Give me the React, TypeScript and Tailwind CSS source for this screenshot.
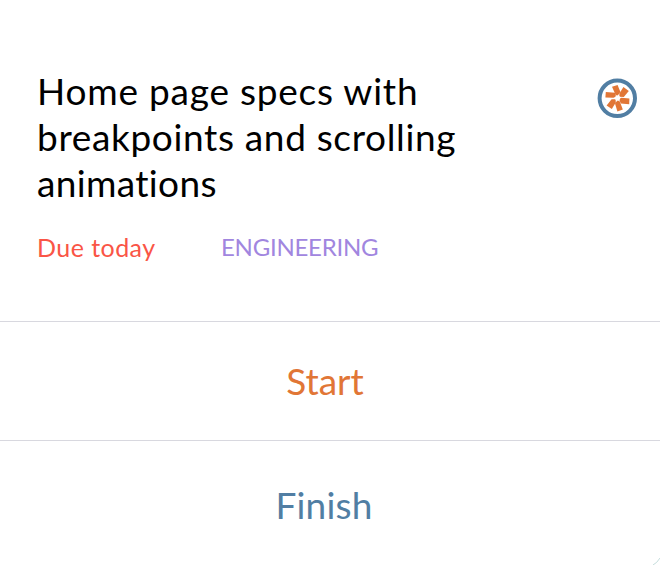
const petals = [
  "M8.8 14 L18 14.8 L19 18.4 L16.5 19.8 L8.4 19.4 Z",
  "M15 8.8 L20.6 7 L23.4 14 L20.6 17.8 L18.6 17 Z",
  "M26.4 9 L31.8 13 L26.8 19 L22.4 18.8 L22.4 15.4 Z",
  "M22 21 L24.4 19.8 L32.4 20.4 L32.2 26.2 L23.8 25.4 Z",
  "M18 25.6 L20.6 22.2 L22.8 23.4 L25.8 31.6 L20.4 33.6 Z",
  "M14.6 21.2 L18.6 21.2 L18.8 24.6 L14.8 31 L9.6 27.6 Z",
];

function TrackerBadge() {
  return (
    <svg className="size-10 shrink-0" viewBox="0 0 40 40" aria-hidden="true">
      <circle cx="20.3" cy="20.3" r="17.7" fill="#fff" stroke="#517ea3" strokeWidth="4" />
      {petals.map((d) => (
        <path key={d} d={d} fill="#e17636" />
      ))}
      <circle cx="20.6" cy="20.1" r="2.5" fill="#fff" />
    </svg>
  );
}

export default function App() {
  return (
    <main className="flex h-[565px] w-[660px] flex-col overflow-hidden bg-white font-['Lato',sans-serif]">
      <section className="flex h-[321px] flex-col pt-[68px] pr-[23px] pl-[37px]">
        <div className="flex items-start justify-between">
          <h1 className="text-[37px] leading-[46px] text-black">
            <span className="block tracking-[0.78px]">Home page specs with</span>
            <span className="block tracking-[0.66px]">breakpoints and scrolling</span>
            <span className="block tracking-[0.35px]">animations</span>
          </h1>
          <div className="pt-[10px]">
            <TrackerBadge />
          </div>
        </div>
        <div className="flex pt-[25px] text-[25px] leading-[32px]">
          <span className="w-[184px] tracking-[0.45px] text-[#fa5546]">Due today</span>
          <span className="text-[24px] tracking-[-0.25px] text-[#a186df]">ENGINEERING</span>
        </div>
      </section>
      <button className="h-[119px] border-t border-[#d8d8df] pr-[10px] text-[37px] leading-[46px] text-[#e17636]">
        Start
      </button>
      <div className="flex flex-1 border-t border-[#d8d8df]">
        <button className="flex-1 pt-[4px] pr-[12px] text-[37px] leading-[46px] tracking-[0.2px] text-[#517ea3]">
          Finish
        </button>
        <svg className="-ml-2 size-2 self-end" viewBox="0 0 8 8" aria-hidden="true">
          <path d="M1 8 Q5 6 8 1" fill="none" stroke="#c5dddc" strokeWidth="1" />
        </svg>
      </div>
    </main>
  );
}
